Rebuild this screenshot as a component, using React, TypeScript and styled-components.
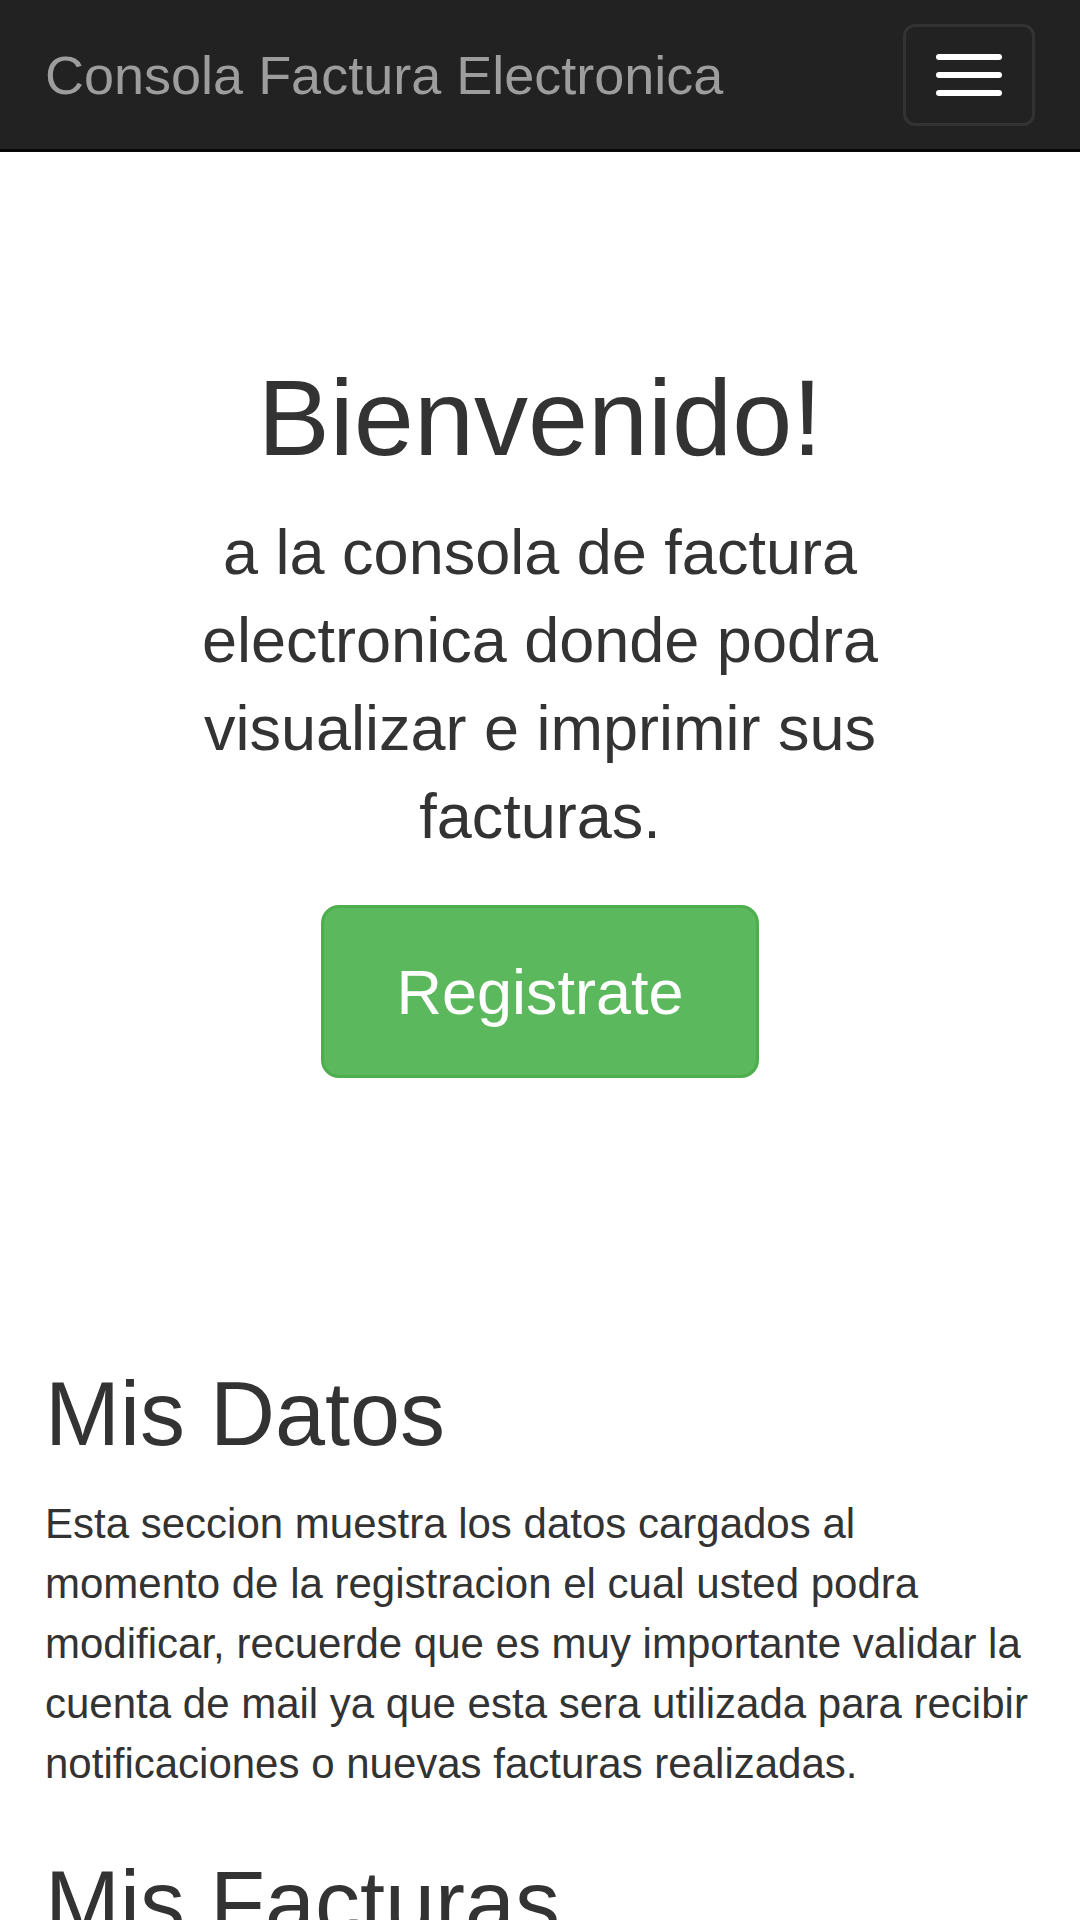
import React from 'react';
import styled, { createGlobalStyle } from 'styled-components';

const GlobalStyles = createGlobalStyle`
  html, body {
    margin: 0;
    padding: 0;
    background: #ffffff;
  }
  body {
    font-family: "Liberation Sans", Arial, Helvetica, sans-serif;
    font-size: 42px;
    line-height: 60px;
    color: #333333;
  }
  * {
    box-sizing: border-box;
  }
`;

const Navbar = styled.nav`
  background-color: #222222;
  border-bottom: 3px solid #080808;
  min-height: 152px;
  margin-bottom: 57px;
`;

const NavInner = styled.div`
  display: flex;
  justify-content: space-between;
  align-items: flex-start;
  padding: 0 45px;
`;

const Brand = styled.a`
  display: block;
  padding: 45px 0;
  font-size: 54px;
  line-height: 60px;
  height: 149px;
  color: #9d9d9d;
  text-decoration: none;
`;

const Toggle = styled.button`
  display: flex;
  flex-direction: column;
  gap: 12px;
  margin-top: 24px;
  padding: 27px 30px;
  background: transparent;
  border: 3px solid #333333;
  border-radius: 12px;
  cursor: pointer;
`;

const IconBar = styled.span`
  display: block;
  width: 66px;
  height: 6px;
  border-radius: 3px;
  background-color: #ffffff;
`;

const Container = styled.div`
  padding: 0 45px;
`;

const Jumbotron = styled.div`
  padding: 90px 45px;
  margin-bottom: 92px;
  text-align: center;
  background-color: #ffffff;
`;

const Title = styled.h1`
  font-size: 108px;
  line-height: 1.1;
  font-weight: 500;
  margin: 60px 0 30px;
`;

const Lead = styled.p`
  font-size: 63px;
  line-height: 88px;
  font-weight: 200;
  margin: 0 0 45px;
`;

const SuccessButton = styled.a`
  display: inline-block;
  padding: 42px 72px 41px;
  font-size: 63px;
  line-height: 84px;
  color: #ffffff;
  background-color: #5cb85c;
  border: 3px solid #4cae4c;
  border-radius: 18px;
  text-decoration: none;
  cursor: pointer;
`;

const Section = styled.div`
  display: flow-root;
`;

const SectionTitle = styled.h2`
  font-size: 90px;
  line-height: 1.1;
  font-weight: 500;
  margin: 60px 0 30px;
`;

const Text = styled.p`
  margin: 0 0 30px;
`;

const App: React.FC = () => {
  return (
    <>
      <GlobalStyles />
      <Navbar>
        <NavInner>
          <Brand href="#">Consola Factura Electronica</Brand>
          <Toggle aria-label="Toggle navigation">
            <IconBar />
            <IconBar />
            <IconBar />
          </Toggle>
        </NavInner>
      </Navbar>
      <Container>
        <Jumbotron>
          <Title>Bienvenido!</Title>
          <Lead>a la consola de factura electronica donde podra visualizar e imprimir sus facturas.</Lead>
          <Lead>
            <SuccessButton href="#">Registrate</SuccessButton>
          </Lead>
        </Jumbotron>
      </Container>
      <Container>
        <Section>
          <SectionTitle>Mis Datos</SectionTitle>
          <Text>
            Esta seccion muestra los datos cargados al momento de la registracion el cual usted podra
            modificar, recuerde que es muy importante validar la cuenta de mail ya que esta sera
            utilizada para recibir notificaciones o nuevas facturas realizadas.
          </Text>
          <SectionTitle>Mis Facturas</SectionTitle>
          <Text>
            En esta seccion podra consultar, visualizar e imprimir todas las facturas emitidas a su
            nombre.
          </Text>
        </Section>
      </Container>
    </>
  );
};

export default App;
